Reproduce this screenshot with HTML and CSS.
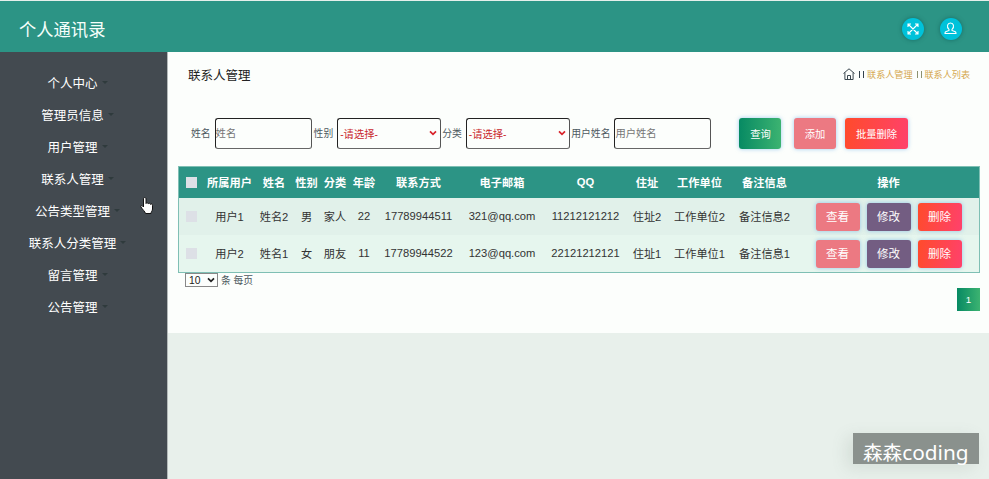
FILE: index.html
```html
<!DOCTYPE html>
<html lang="zh-CN">
<head>
<meta charset="utf-8">
<title>个人通讯录</title>
<link rel="stylesheet" href="styles.css">
</head>
<body>
<header class="topbar">
  <h1 class="brand">个人通讯录</h1>
  <div class="tools">
    <span class="tool"><svg width="12" height="12" viewBox="0 0 12 12" fill="none" stroke="#fff" stroke-width="1.1"><path d="M1 4V1h3M8 1h3v3M11 8v3H8M4 11H1V8M1 1l10 10M11 1L1 11"/></svg></span>
    <span class="tool"><svg width="13" height="13" viewBox="0 0 13 13" fill="none" stroke="#fff" stroke-width="1.100"><path d="M5 7.4C3.700 6.300 3.200 4.600 3.600 3.100 4 1.500 5 1 6.500 1s2.500.5 2.900 2.100C9.800 4.600 9.300 6.300 8 7.400v1.100l3.300 1.300c.6.300.7.800.7 1.700H1c0-.9.100-1.400.7-1.700L5 8.500z"/></svg></span>
  </div>
</header>
<div class="shell">
  <nav class="sidebar">
    <a class="item">个人中心</a>
    <a class="item">管理员信息</a>
    <a class="item">用户管理</a>
    <a class="item">联系人管理</a>
    <a class="item">公告类型管理</a>
    <a class="item">联系人分类管理</a>
    <a class="item">留言管理</a>
    <a class="item">公告管理</a>
  </nav>
  <main class="content">
    <section class="panel">
      <div class="heading">
        <h2 class="title">联系人管理</h2>
        <div class="crumbs">
          <svg width="12" height="12" viewBox="0 0 12 12" fill="none" stroke="#3c4850" stroke-width="1"><path d="M.5 5.500L6 .8l5.500 4.700M1.900 4.500v7h8.200v-7M4.500 11.500v-4h3v4"/></svg>
          <span class="bars"></span><a>联系人管理</a><span class="bars soft"></span><a>联系人列表</a>
        </div>
      </div>
      <form class="filters">
        <label>姓名</label><input class="field f1" placeholder="姓名">
        <label class="l2">性别</label><div class="field pick"><span>-请选择-</span><svg width="8" height="6" viewBox="0 0 8 6" fill="none" stroke="#d8222a" stroke-width="1.700"><path d="M1 1.300l3 3 3-3"/></svg></div>
        <label class="l3">分类</label><div class="field pick"><span>-请选择-</span><svg width="8" height="6" viewBox="0 0 8 6" fill="none" stroke="#d8222a" stroke-width="1.700"><path d="M1 1.300l3 3 3-3"/></svg></div>
        <label class="l4">用户姓名</label><input class="field f4" placeholder="用户姓名">
        <button type="button" class="btn green">查询</button>
        <button type="button" class="btn pink">添加</button>
        <button type="button" class="btn red wide">批量删除</button>
      </form>
      <table class="grid">
        <colgroup><col class="c1"><col class="c2"><col class="c3"><col class="c4"><col class="c5"><col class="c6"><col class="c7"><col class="c8"><col class="c9"><col class="c10"><col class="c11"><col class="c12"><col></colgroup>
        <thead><tr><th><i class="box"></i></th><th>所属用户</th><th>姓名</th><th>性别</th><th>分类</th><th>年龄</th><th>联系方式</th><th>电子邮箱</th><th>QQ</th><th>住址</th><th>工作单位</th><th>备注信息</th><th>操作</th></tr></thead>
        <tbody>
          <tr><td><i class="box"></i></td><td>用户1</td><td>姓名2</td><td>男</td><td>家人</td><td>22</td><td>17789944511</td><td>321@qq.com</td><td>11212121212</td><td>住址2</td><td>工作单位2</td><td>备注信息2</td><td><div class="ops"><button class="btn pink">查看</button><button class="btn violet">修改</button><button class="btn red">删除</button></div></td></tr>
          <tr><td><i class="box"></i></td><td>用户2</td><td>姓名1</td><td>女</td><td>朋友</td><td>11</td><td>17789944522</td><td>123@qq.com</td><td>22121212121</td><td>住址1</td><td>工作单位1</td><td>备注信息1</td><td><div class="ops"><button class="btn pink">查看</button><button class="btn violet">修改</button><button class="btn red">删除</button></div></td></tr>
        </tbody>
      </table>
      <div class="perpage"><div class="size"><span>10</span><svg width="8" height="6" viewBox="0 0 8 6" fill="none" stroke="#222" stroke-width="1.700"><path d="M1 1.300l3 3 3-3"/></svg></div><span>条 每页</span></div>
      <div class="pager"><span class="page">1</span></div>
    </section>
  </main>
</div>
<svg class="cursor" width="14" height="18" viewBox="0 0 14 18" fill="#fff" stroke="#111" stroke-width="1"><path d="M3.500 10V2c0-2 2.500-2 2.500 0v4.500c.3-1 2.200-.9 2.300.3.400-.9 2.100-.7 2.200.6.500-.8 2-.5 2 .9V12c0 2-1.500 2.500-1.500 4.500H5.500C5 14.500 2.500 12.500 1 10c-.8-1.500 1-2.300 2.500 0z"/></svg>
<div class="mark">森森<span class="latin">coding</span></div>
</body>
</html>
```
FILE: styles.css
```css
* { box-sizing: border-box; }
body {
  margin: 0;
  height: 479px;
  overflow: hidden;
  display: flex;
  flex-direction: column;
  background: #e8f0eb;
  font-family: "Liberation Sans", "Noto Sans CJK SC", sans-serif;
  font-size: 11.2px;
  color: #333;
}
.topbar {
  height: 52px;
  flex: none;
  display: flex;
  align-items: center;
  justify-content: space-between;
  padding: 4px 27.5px 0 19px;
  background: #2c9485;
  border-top: 1px solid #e6efeb;
}
.brand { margin: 0; font-size: 17.3px; font-weight: 400; color: #f5fffb; }
.tools { display: flex; gap: 16px; }
.tool {
  width: 22px;
  height: 22px;
  border-radius: 50%;
  background: #00c2da;
  box-shadow: 0 0 4px rgba(0, 70, 70, .5);
  display: flex;
  align-items: center;
  justify-content: center;
}
.shell { flex: 1; display: flex; min-height: 0; }
.sidebar {
  width: 168px;
  flex: none;
  background: #434a50;
  border-right: 1px solid #b3b9b9;
  padding: 15px 12px 0 0;
}
.item {
  display: flex;
  height: 32px;
  align-items: center;
  justify-content: center;
  gap: 4px;
  padding-bottom: 2px;
  font-size: 12.5px;
  color: #fff;
  white-space: nowrap;
}
.item::after {
  content: "";
  border: 3px solid transparent;
  border-top-color: #2f3a3c;
  border-bottom: 0;
}
.content { flex: 1; min-width: 0; }
.panel { height: 281px; background: #fcfefc; padding: 0 9px 0 10px; }
.heading {
  height: 46px;
  display: flex;
  align-items: center;
  justify-content: space-between;
  padding: 0 10px 2px;
}
.title { margin: 0; font-size: 12.5px; font-weight: 400; color: #222; }
.crumbs { display: flex; align-items: center; font-size: 9.1px; color: #d6a951; }
.bars {
  width: 5px;
  height: 7px;
  margin: 0 3px 0 4px;
  border: solid #34424c;
  border-width: 0 1.500px;
}
.bars.soft { border-color: #8c9170; }
.filters {
  display: flex;
  align-items: center;
  height: 31px;
  margin: 20px 0 17px;
  padding-left: 13px;
  font-size: 9.8px;
  color: #4d5960;
  white-space: nowrap;
}
.filters label { padding-bottom: 2px; }
.field {
  height: 31px;
  border: 1px solid #333;
  border-color: #222 #555 #666 #222;
  border-radius: 3px;
  background: #fcfefc;
  padding: 0;
  font: 10.3px "Liberation Sans", "Noto Sans CJK SC", sans-serif;
}
.field::placeholder { color: #757575; }
.f1, .f4 { width: 97px; }
.f1 { margin-left: 4px; }
.f4 { margin-left: 4px; }
.l2 { margin-left: 2px; margin-right: 4px; }
.l3 { margin-left: 1px; margin-right: 4px; }
.l4 { margin-left: 1.500px; }
.pick {
  width: 104px;
  display: flex;
  align-items: center;
  justify-content: space-between;
  padding: 0 3px 1px 2px;
  color: #c9272e;
}
.btn {
  height: 31px;
  width: 42px;
  padding: 0 0 1px;
  border: 0;
  border-radius: 3px;
  color: #fff;
  font: 10.3px "Liberation Sans", "Noto Sans CJK SC", sans-serif;
  box-shadow: 0 0 4px rgba(80, 160, 230, .55);
}
.filters .green { margin-left: 28px; }
.filters .pink { margin-left: 12.5px; }
.filters .red { margin-left: 9px; }
.green { background: linear-gradient(90deg, #078a63, #3cb371); }
.pink { background: #ec7982; }
.violet { background: #735d82; }
.red { background: linear-gradient(100deg, #ff4b2b, #ff416c); }
.wide { width: 63px; }
.grid {
  width: 802px;
  table-layout: fixed;
  border-collapse: separate;
  border-spacing: 0;
  border: 1px solid #7fbfb4;
  text-align: center;
  white-space: nowrap;
}
.c1 { width: 25px; }
.c2 { width: 51px; }
.c3 { width: 38px; }
.c4 { width: 27px; }
.c5 { width: 30px; }
.c6 { width: 28px; }
.c7 { width: 81px; }
.c8 { width: 86px; }
.c9 { width: 81px; }
.c10 { width: 42px; }
.c11 { width: 63px; }
.c12 { width: 67px; }
.grid th { height: 31px; padding: 0 0 1px; background: #2c9485; color: #fff; }
.grid th:first-child { padding: 0; }
.grid td { height: 37px; padding: 0 0 1px; background: #e6f6ee; }
.grid td:first-child { padding: 0; }
.grid td:last-child { padding: 0; }
.grid tbody tr:first-child td { background: #e1f1ea; }
.box { display: block; width: 11px; height: 11px; margin: 0 auto; background: #dde0e6; }
.ops { display: flex; justify-content: center; gap: 7px; }
.ops .btn { width: 44px; height: 28px; font-size: 11.5px; }
.perpage {
  display: flex;
  align-items: center;
  gap: 3px;
  height: 14px;
  padding-left: 7px;
  font-size: 9.8px;
  color: #4d5960;
}
.size {
  width: 33px;
  height: 14px;
  border: 1px solid #888;
  display: flex;
  align-items: center;
  justify-content: space-between;
  padding: 0 2px 0 3px;
  font-size: 10.3px;
  color: #222;
}
.pager { display: flex; justify-content: flex-end; padding-top: 1px; }
.page {
  width: 23px;
  height: 23px;
  line-height: 23px;
  text-align: center;
  font-size: 9.8px;
  color: #fff;
  background: linear-gradient(90deg, #078a63, #3cb371);
}
.cursor { position: absolute; left: 140px; top: 197px; }
.mark {
  position: absolute;
  left: 853px;
  top: 433px;
  width: 126px;
  height: 31px;
  line-height: 39px;
  padding-left: 10px;
  background: #8a918d;
  box-shadow: -6px 4px 16px rgba(100, 120, 110, .15);
  color: #fff;
  font-family: "Noto Sans", "Noto Sans CJK SC", sans-serif;
  font-size: 19.6px;
  white-space: nowrap;
}
.latin { font-size: 20.8px; }
```
